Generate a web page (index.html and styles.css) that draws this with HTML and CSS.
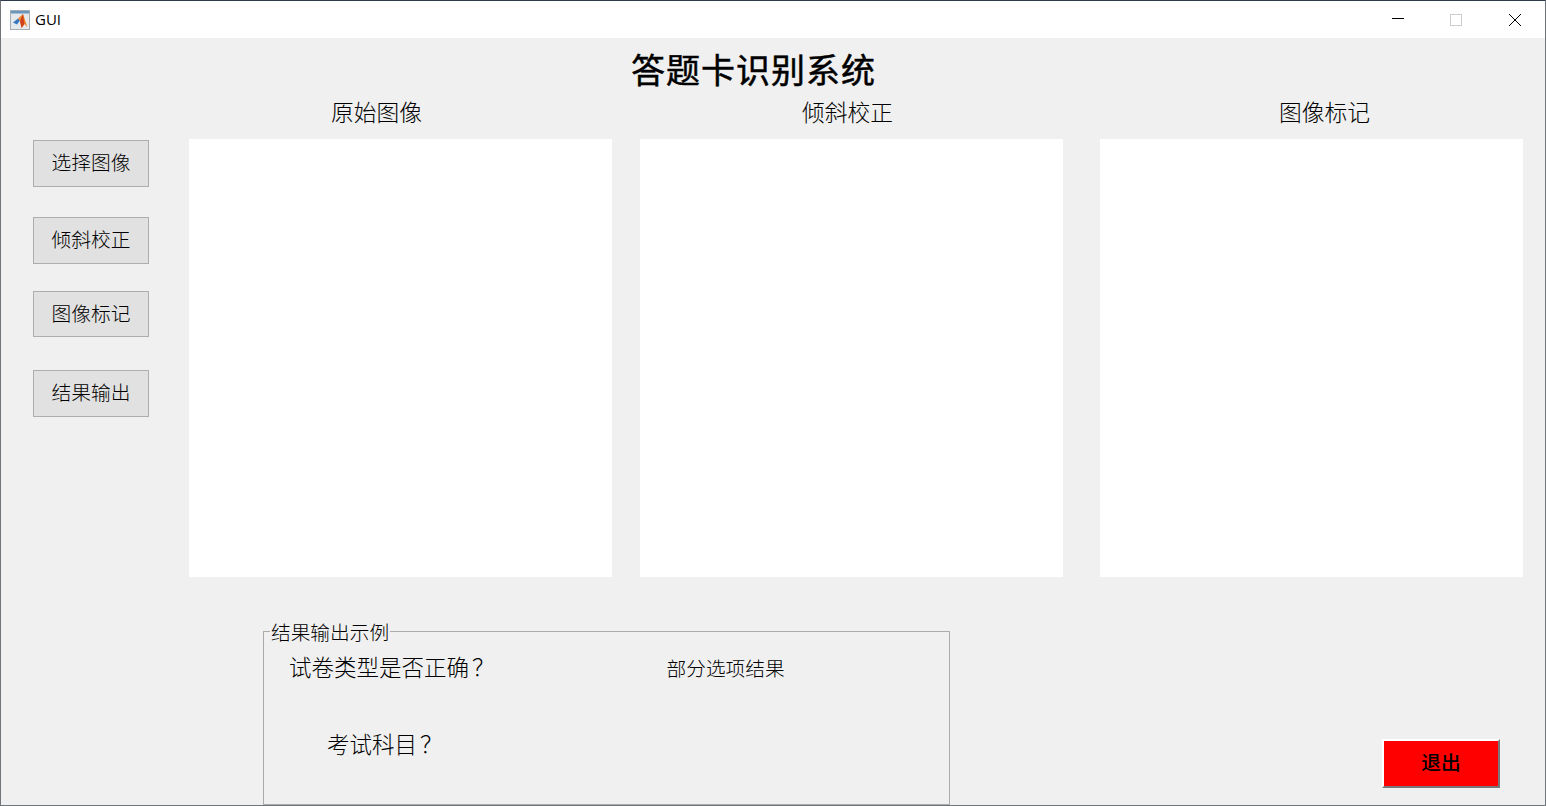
FILE: index.html
```html
<!DOCTYPE html>
<html lang="zh-CN">
<head>
<meta charset="utf-8">
<title>GUI</title>
<link rel="stylesheet" href="styles.css">
</head>
<body>
<div class="window">
  <header class="titlebar">
    <svg class="app-icon" viewBox="0 0 20 20" width="20" height="20">
      <rect x="0.5" y="0.5" width="19" height="19" fill="#e6e9ec" stroke="#a4abb2"/>
      <rect x="1" y="1" width="18" height="2.5" fill="#6b97bd"/>
      <path d="M3 12.5 L8 8.5 L10 10.5 L7 14.5Z" fill="#3a78bd"/>
      <path d="M8 8.5 L13 4 L17.5 17 L14.5 14 L11.5 18 L10 11Z" fill="#ef8a2e"/>
      <path d="M13 4 L10 11 L11.5 18 L14.5 14Z" fill="#cf421c"/>
    </svg>
    <span class="app-name">GUI</span>
    <div class="controls">
      <svg viewBox="0 0 12 12" width="12" height="12" class="ctl-min"><path d="M0 6.5H12.5" stroke="#000" stroke-width="1"/></svg>
      <svg viewBox="0 0 12 12" width="12" height="12" class="ctl-max"><rect x="0.5" y="0.5" width="11" height="11" fill="none" stroke="#ccc"/></svg>
      <svg viewBox="0 0 12 12" width="12" height="12" class="ctl-close"><path d="M0 0L12 12M12 0L0 12" stroke="#000" stroke-width="1"/></svg>
    </div>
  </header>
  <main class="content">
    <h1 class="heading">答题卡识别系统</h1>
    <div class="labels">
      <span class="label label-a">原始图像</span>
      <span class="label label-b">倾斜校正</span>
      <span class="label label-c">图像标记</span>
    </div>
    <div class="workspace">
      <nav class="actions">
        <button class="btn btn-1">选择图像</button>
        <button class="btn btn-2">倾斜校正</button>
        <button class="btn btn-3">图像标记</button>
        <button class="btn btn-4">结果输出</button>
      </nav>
      <div class="panel panel-a"></div>
      <div class="panel panel-b"></div>
      <div class="panel panel-c"></div>
    </div>
    <div class="bottom">
      <fieldset class="group">
        <legend class="group-title">结果输出示例</legend>
        <div class="row-one">
          <span class="q">试卷类型是否正确<span class="qm">&#xFF1F;</span></span>
          <span class="partial">部分选项结果</span>
        </div>
        <div class="q q-subject">考试科目<span class="qm">&#xFF1F;</span></div>
      </fieldset>
      <button class="exit">退出</button>
    </div>
  </main>
</div>
</body>
</html>
```
FILE: styles.css
```css
* { box-sizing: border-box; }
html, body { margin: 0; height: 806px; overflow: hidden; }
body {
  font-family: "Liberation Serif", "Noto Sans CJK SC", serif;
  font-weight: 300;
  color: #000;
}
.window {
  width: 1546px;
  height: 806px;
  display: flex;
  flex-direction: column;
  background: #f0f0f0;
  border: 1px solid #70757a;
  border-top-color: #2c3b47;
  overflow: hidden;
}
.titlebar {
  height: 37px;
  flex: none;
  display: flex;
  align-items: center;
  background: #fff;
  padding-left: 9px;
}
.app-icon { flex: none; }
.app-name {
  margin: -2px 0 0 5px;
  font: 400 15px "Open Sans", "Noto Sans", sans-serif;
  color: #000;
}
.controls { margin-left: auto; display: flex; align-items: center; }
.ctl-min { margin-right: 46px; margin-top: -3px; }
.ctl-max { margin-right: 47px; }
.ctl-close { margin-right: 24px; }
.content { flex: 1; display: flex; flex-direction: column; min-height: 0; }
.heading {
  margin: 14px 0 0 0;
  padding-left: 630px;
  font-size: 34px;
  line-height: 40px;
  height: 45px;
  font-weight: 400;
  -webkit-text-stroke: 0.5px #000;
  letter-spacing: 1px;
  color: #000;
}
.labels { display: flex; height: 43px; font-size: 22.75px; line-height: 34px; }
.label { display: block; width: 92px; white-space: nowrap; }
.label-a { margin-left: 330px; }
.label-b { margin-left: 379px; }
.label-c { margin-left: 385px; }
.workspace { display: flex; align-items: flex-start; height: 438px; margin-top: -1px; }
.actions { width: 188px; flex: none; padding-left: 32px; display: flex; flex-direction: column; }
.btn {
  width: 116px;
  height: 47px;
  background: #e1e1e1;
  border: 1px solid #adadad;
  font: inherit;
  font-size: 19.75px;
  color: #000;
  padding: 0 0 4px;
  display: block;
}
.btn-1 { margin-top: 1px; }
.btn-2 { margin-top: 30px; }
.btn-3 { margin-top: 27px; height: 46px; }
.btn-4 { margin-top: 33px; }
.panel { width: 423px; height: 438px; background: #fff; flex: none; }
.panel-b { margin-left: 28px; }
.panel-c { margin-left: 37px; }
.bottom { display: flex; align-items: flex-start; margin-top: 42px; flex: 1; min-height: 0; }
.group {
  margin: 0 0 0 262px;
  width: 687px;
  height: 186px;
  padding: 0 0 0 25px;
  border: 1px solid #ababab;
  flex: none;
  min-width: 0;
}
.group-title { font-size: 19.7px; line-height: 22px; padding: 3px 1px 0; margin-left: -19px; color: #000; }
.row-one { display: flex; align-items: center; height: 26px; margin-top: 10px; }
.q { font-size: 22.5px; line-height: 26px; white-space: nowrap; }
.qm { font-family: "Noto Sans CJK TC", sans-serif; margin-left: 3px; }
.partial { font-size: 19.7px; margin-left: 172px; white-space: nowrap; }
.q-subject { margin: 50px 0 0 38px; }
.exit {
  margin: 120px 0 0 432px;
  width: 118px;
  height: 49px;
  background: #f00;
  border: 2px solid;
  border-color: #fff #777 #777 #fff;
  font: inherit;
  font-size: 19.7px;
  font-weight: 500;
  color: #000;
  padding: 0 0 4px;
  flex: none;
}
```
